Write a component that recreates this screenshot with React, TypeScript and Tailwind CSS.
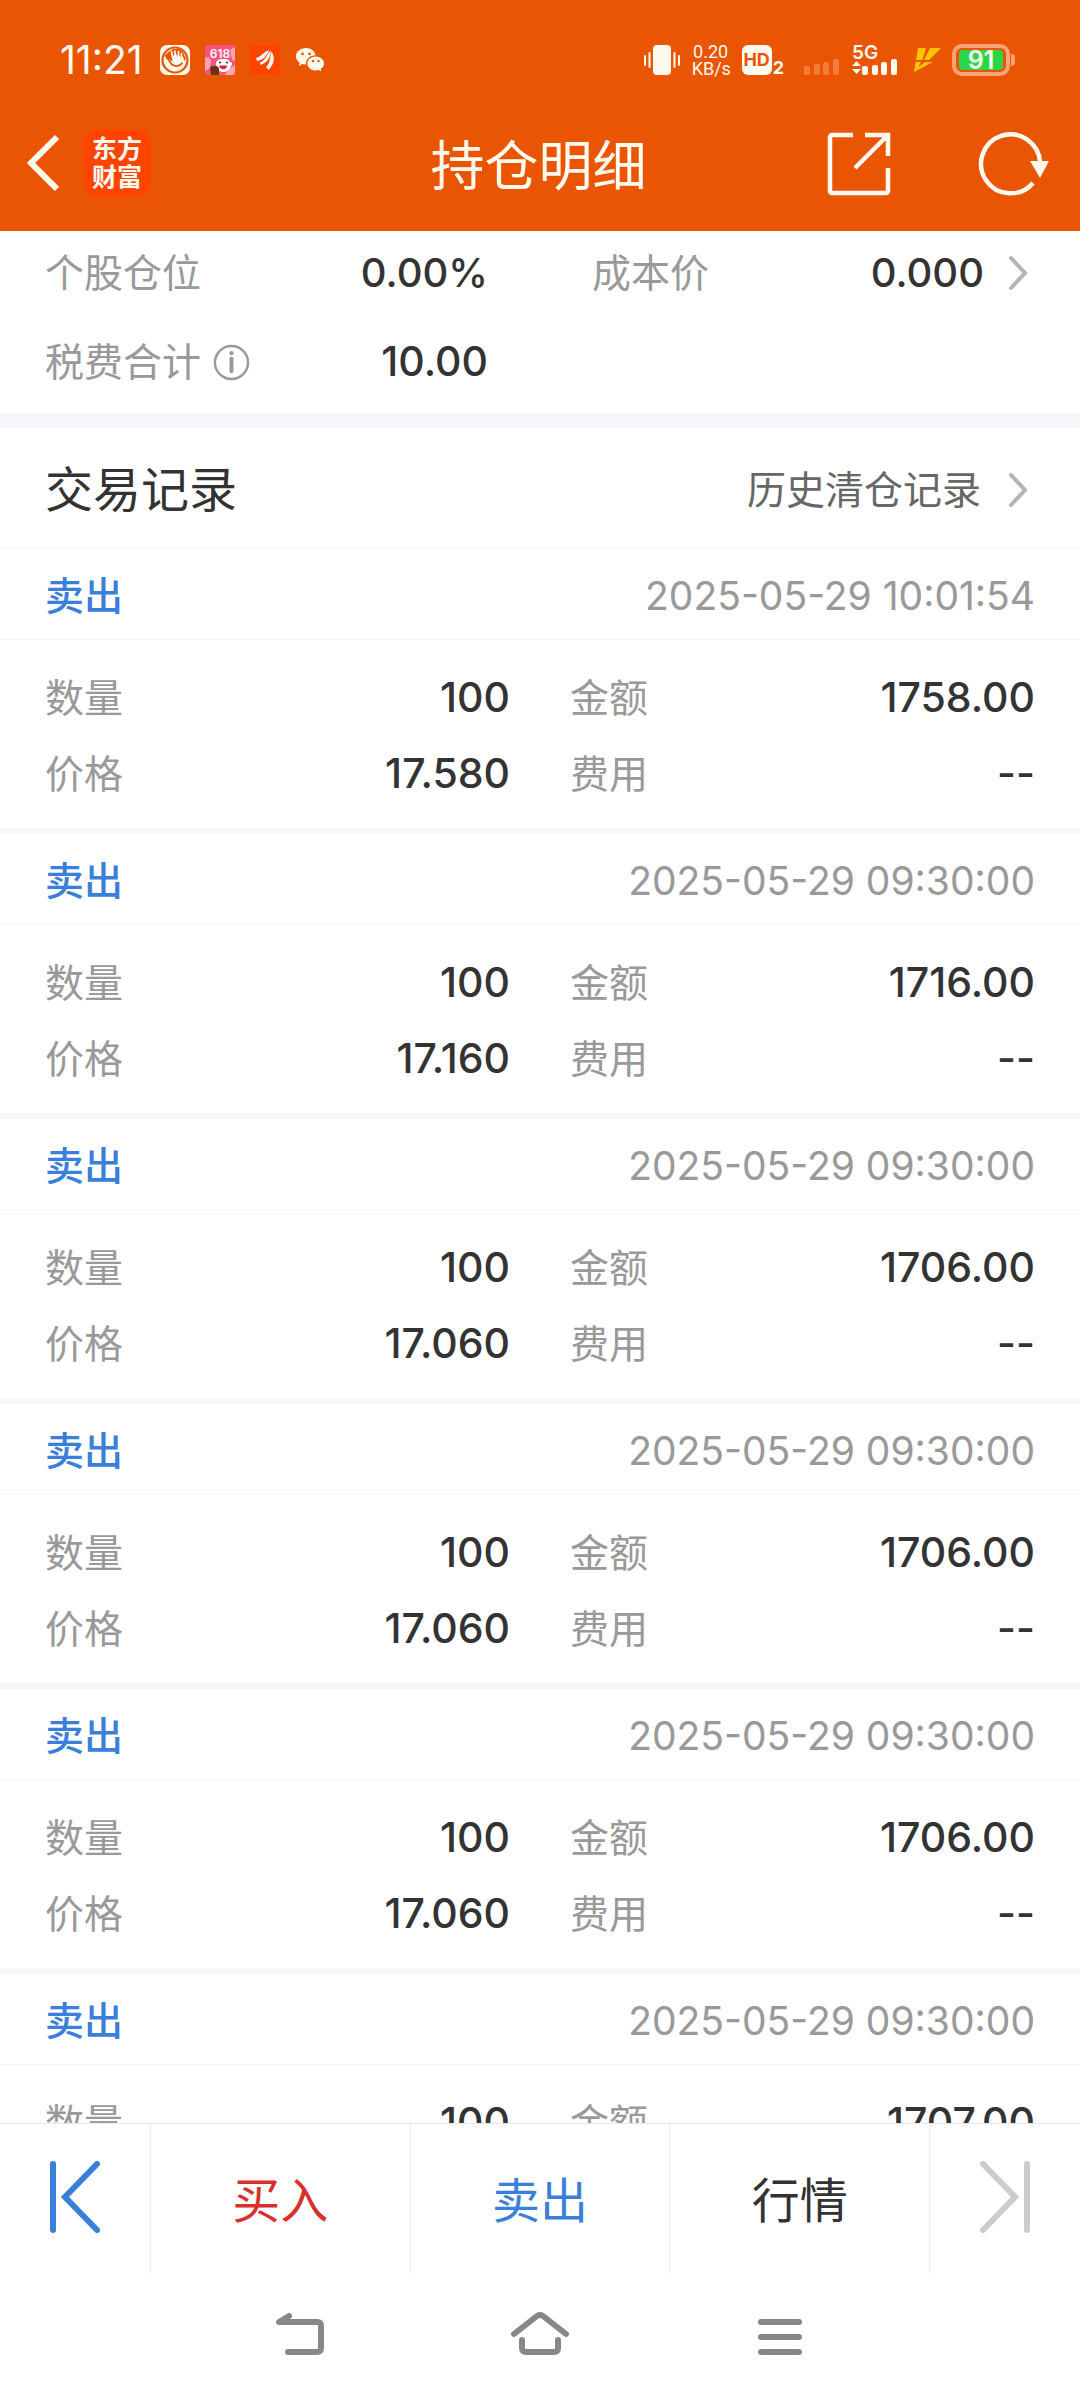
import React from "react";

type Trade = { time: string; amount: string; price?: string };

const trades: Trade[] = [
  { time: "2025-05-29 10:01:54", amount: "1758.00", price: "17.580" },
  { time: "2025-05-29 09:30:00", amount: "1716.00", price: "17.160" },
  { time: "2025-05-29 09:30:00", amount: "1706.00", price: "17.060" },
  { time: "2025-05-29 09:30:00", amount: "1706.00", price: "17.060" },
  { time: "2025-05-29 09:30:00", amount: "1706.00", price: "17.060" },
  { time: "2025-05-29 09:30:00", amount: "1707.00" },
];

function StatusBar() {
  return (
    <div className="flex h-[120px] items-center justify-between pr-[65px] pl-[60px] text-[#fffaf0]">
      <div className="flex items-center">
        <span className="mr-4 w-[84px] text-[39px] leading-[48px] whitespace-nowrap">11:21</span>
        <svg className="mr-[15px] size-[30px]" viewBox="0 0 30 30" fill="none">
          <rect width="30" height="30" rx="7" fill="#fffaf0" />
          <circle cx="15" cy="15" r="12.5" stroke="#ea5504" strokeWidth="2.2" />
          <path d="M4 11L9 6.500l4-2.500h6l4 3 3 7-2 2-1-5-2 3-1-4-2 2.500-2-4-2 3-2.500-3 1 8c-2-1-4-4-8.500-5.500z" fill="#ea5504" />
          <path d="M6 12.500c3 .5 3.500 5 6 7 3 2.500 8 2 10.500-2" stroke="#ea5504" strokeWidth="1.800" />
          <path d="M11.500 6.500l1.500 7M15 6v7M18.500 6.500v7M21.500 8.500v6" stroke="#fffaf0" strokeWidth="1.700" strokeLinecap="round" />
        </svg>
        <svg className="mr-[15px] size-[30px]" viewBox="0 0 30 30">
          <rect width="30" height="30" rx="3" fill="#f4557f" />
          <path d="M0 13c3-2 5 0 6 2l-1 8-5 3zM25 5l5-3v14l-3-1zM24 24l6-4v7a3 3 0 0 1-3 3h-7z" fill="#f9a3bb" />
          <text x="15" y="12.500" textAnchor="middle" fontSize="12" fontWeight="600" fill="#fffaf0">618</text>
          <path d="M11 18c1-3 3-4 7-4 3 0 6 0 7 3 2 0 3 2 1 4-1 4-4 6-8 6s-7-3-7-6z" fill="#fff" />
          <circle cx="15" cy="17.500" r="1" fill="#222" />
          <circle cx="22" cy="17.500" r="1" fill="#222" />
          <path d="M14 20.500h8c0 5-7 5-8 0z" fill="#d2263c" />
          <path d="M5 23l2-2h5l2 2v7H6z" fill="#6b3218" />
        </svg>
        <svg className="mr-4 size-[30px]" viewBox="0 0 30 30" fill="#fffaf0">
          <rect width="30" height="30" rx="2" fill="#ff4400" />
          <path d="M6 13C11 12 13 7 19 5c-2 6-6 10-12 11z" />
          <path d="M10.500 20l-.5-2.500C16 15 17 9 20.500 5.500 21 12 17 18 10.500 20z" />
          <path d="M18.500 25L16 22c4-3 4-10 5.500-15.500C25 12 25 18 18.500 25z" />
        </svg>
        <svg className="h-6 w-7" viewBox="0 0 28 24" fill="#fffaf0">
          <path fillRule="evenodd" d="M10 0C4.500 0 0 3.600 0 8.300c0 2.700 1.400 5 3.700 6.500L2.800 18l3.500-1.900c1.200.3 2.400.5 3.700.5C9.500 11 14 7.500 19.600 7.300 18.600 3 14.700 0 10 0zM6.500 4.500a1.400 1.400 0 1 1 0 2.800 1.400 1.400 0 0 1 0-2.800zm7 0a1.400 1.400 0 1 1 0 2.800 1.400 1.400 0 0 1 0-2.800z" />
          <path fillRule="evenodd" d="M28 15.400c0-3.900-3.800-7-8.300-7s-8.300 3.100-8.300 7 3.700 7 8.300 7c1 0 2-.2 2.900-.4l2.800 1.500-.8-2.500c2-1.300 3.400-3.300 3.400-5.600zm-11-3.600a1.200 1.200 0 1 1 0 2.400 1.200 1.200 0 0 1 0-2.400zm5.500 0a1.200 1.200 0 1 1 0 2.400 1.200 1.200 0 0 1 0-2.400z" />
        </svg>
      </div>
      <div className="flex items-center">
        <svg className="mr-3 h-[30px] w-9" viewBox="0 0 36 30" fill="#fffaf0">
          <rect x="9" width="18" height="30" rx="4" />
          <path d="M1 11v9M5.500 8v14M30.500 8v14M35 11v9" stroke="#fffaf0" strokeWidth="2" strokeLinecap="round" />
        </svg>
        <div className="mr-3 w-[38px] text-center text-[18px] leading-[17px] whitespace-nowrap font-['Roboto',sans-serif]">
          <div>0.20</div>
          <div>KB/s</div>
        </div>
        <div className="mr-5 flex items-end">
          <span className="flex size-[30px] items-center justify-center rounded-md bg-[#fffaf0] text-[18px] leading-none font-bold text-[#ea5504]">HD</span>
          <span className="ml-px text-[18px] leading-[14px] font-bold">2</span>
        </div>
        <svg className="mr-3 h-[30px] w-9" viewBox="0 0 36 30" fill="#f37c3a">
          <rect x="0" y="21" width="6" height="9" rx="2" />
          <rect x="10" y="19" width="6" height="11" rx="2" />
          <rect x="19" y="17" width="6" height="13" rx="2" />
          <rect x="29" y="14" width="6" height="16" rx="2" />
        </svg>
        <div className="relative mr-4 h-[30px] w-[46px]">
          <span className="absolute top-0 left-0 text-[19px] leading-[15px] font-semibold">5G</span>
          <svg className="size-full" viewBox="0 0 46 30" fill="#fffaf0">
            <path d="M0 21l4.500-5 4.500 5zM0 24h9l-4.500 5z" />
            <rect x="10" y="21" width="6" height="9" rx="2" />
            <rect x="20" y="20" width="6" height="10" rx="2" />
            <rect x="29" y="17" width="6" height="13" rx="2" />
            <rect x="39" y="14" width="6" height="16" rx="2" />
          </svg>
        </div>
        <svg className="mr-[10px] h-6 w-7" viewBox="0 0 28 24" fill="#ffc400">
          <path d="M4 0h8L8.500 12H2zM16 0h11L15 12h-5zM1.500 14H7l-2.500 5L11 14h8L0 24z" />
        </svg>
        <div className="flex items-center">
          <div className="flex h-8 w-[58px] items-center justify-center rounded-[10px] border-4 border-[#fba477]">
            <span className="h-5 w-11 rounded-sm bg-[#2ad54a] text-center text-[25px] leading-5 font-semibold">91</span>
          </div>
          <span className="ml-px h-3 w-1 rounded-r-full bg-[#fba477]" />
        </div>
      </div>
    </div>
  );
}

function TitleBar() {
  return (
    <div className="flex h-[111px] items-start pt-[9px] pr-[30px] pl-[27px] text-[#fffaf0]">
      <div className="flex flex-1 items-center gap-6">
        <button aria-label="返回">
          <svg className="h-[68px] w-8" viewBox="0 0 32 68" fill="none" stroke="currentColor" strokeWidth="6">
            <path d="M30 8L4 34l26 26" />
          </svg>
        </button>
        <span className="flex size-[68px] flex-col items-center justify-center rounded-2xl bg-[#ff4400] text-[25px] leading-[28px] font-bold">
          <span>东方</span>
          <span>财富</span>
        </span>
      </div>
      <h1 className="pt-[3px] text-[54px] leading-[70px]">持仓明细</h1>
      <div className="flex flex-1 items-center justify-end gap-[87px] pt-[3px]">
        <button aria-label="分享">
          <svg className="h-16 w-16" viewBox="0 0 64 64" fill="none" stroke="currentColor" strokeWidth="4.500">
            <path d="M26 3H5a2 2 0 0 0-2 2v54a2 2 0 0 0 2 2h54a2 2 0 0 0 2-2V36M38 3h23v21M61 3L28 36" />
          </svg>
        </button>
        <button aria-label="刷新">
          <svg className="h-16 w-[72px]" viewBox="0 0 72 64" fill="none" stroke="currentColor" strokeWidth="4.500">
            <path d="M55 51A29.500 29.500 0 1 1 62 30" />
            <path d="M52 29h19L62 46z" fill="currentColor" stroke="none" />
          </svg>
        </button>
      </div>
    </div>
  );
}

function Chevron() {
  return (
    <svg className="h-9 w-5" viewBox="0 0 20 36" fill="none" stroke="#b4b4b4" strokeWidth="4" strokeLinecap="round">
      <path d="M3 3l14 15L3 33" />
    </svg>
  );
}

const labelCls = "text-[39px] text-[#999999]";
const valueCls = "text-[41px] font-medium text-[#333333]";

function Pair({ label, value }: { label: string; value: string }) {
  return (
    <div className="flex h-[76px] items-center justify-between">
      <dt className={labelCls}>{label}</dt>
      <dd className={valueCls}>{value}</dd>
    </div>
  );
}

function TradeRecord({ trade }: { trade: Trade }) {
  return (
    <li className="border-b-6 border-[#f5f7fa]">
      <div className="flex h-[91px] items-center justify-between border-b border-[#f3f4f5] px-[45px] pt-1">
        <span className="text-[39px] font-medium text-[#3a7fd9]">卖出</span>
        <time className="text-[39px] text-[#999999]">{trade.time}</time>
      </div>
      <dl className="grid grid-cols-2 pt-5 pb-4">
        <div className="pr-[30px] pl-[45px]">
          <Pair label="数量" value="100" />
          {trade.price && <Pair label="价格" value={trade.price} />}
        </div>
        <div className="pr-[45px] pl-[30px]">
          <Pair label="金额" value={trade.amount} />
          {trade.price && <Pair label="费用" value="--" />}
        </div>
      </dl>
    </li>
  );
}

export default function App() {
  return (
    <div className="flex h-screen flex-col bg-white leading-normal font-['Inter','Noto_Sans_CJK_SC',sans-serif]">
      <header className="shrink-0 bg-[#ea5504]">
        <StatusBar />
        <TitleBar />
      </header>

      <main className="min-h-0 flex-1 overflow-y-auto [scrollbar-width:none]">
        <dl className="grid grid-cols-2 border-b-[15px] border-[#f5f7fa] pb-1">
          <div className="flex h-[84px] items-center justify-between pr-[52px] pl-[45px]">
            <dt className={labelCls}>个股仓位</dt>
            <dd className="text-[40px] font-medium text-[#333333]">0.00%</dd>
          </div>
          <div className="flex h-[84px] items-center pr-[52px] pl-[52px]">
            <dt className={labelCls}>成本价</dt>
            <dd className="ml-auto text-[40px] font-medium text-[#333333]">0.000</dd>
            <dd className="ml-6">
              <Chevron />
            </dd>
          </div>
          <div className="flex h-[94px] items-center justify-between pr-[52px] pl-[45px]">
            <dt className="flex items-center gap-3 text-[39px] text-[#999999]">
              税费合计
              <svg className="size-[37px]" viewBox="0 0 38 38" fill="none" stroke="#999" strokeWidth="2.500">
                <circle cx="19" cy="19" r="17" />
                <path d="M19 15v13" strokeWidth="4" strokeLinecap="round" />
                <circle cx="19" cy="9.500" r="2.200" fill="#999" stroke="none" />
              </svg>
            </dt>
            <dd className={valueCls}>10.00</dd>
          </div>
        </dl>

        <section>
          <div className="flex h-[121px] items-center justify-between border-b border-[#f3f4f5] pt-1 pr-[52px] pl-[45px]">
            <h2 className="text-[48px] text-[#333333]">交易记录</h2>
            <a href="#history" className="flex items-center gap-[27px] text-[39px] text-[#666666]">
              历史清仓记录
              <Chevron />
            </a>
          </div>
          <ul>
            {trades.map((t, i) => (
              <TradeRecord key={i} trade={t} />
            ))}
          </ul>
        </section>
      </main>

      <div className="flex h-[151px] shrink-0 divide-x divide-[#ececec] border-t border-[#e8e8e8] text-[48px]">
        <button aria-label="上一只" className="flex w-[151px] items-center justify-center pb-1">
          <svg className="h-[72px] w-[50px]" viewBox="0 0 50 72" fill="none" stroke="#3a7fd9" strokeWidth="6" strokeLinecap="round">
            <path d="M3 3v66M47 3L15 36l32 33" />
          </svg>
        </button>
        <button className="flex-1 pt-1 text-[#d9302c]">买入</button>
        <button className="flex-1 pt-1 text-[#3a7fd9]">卖出</button>
        <button className="flex-1 pt-1 text-[#333333]">行情</button>
        <button aria-label="下一只" disabled className="flex w-[150px] items-center justify-center pb-1">
          <svg className="h-[72px] w-[50px]" viewBox="0 0 50 72" fill="none" stroke="#cccccc" strokeWidth="6" strokeLinecap="round">
            <path d="M47 3v66M3 3l32 33L3 69" />
          </svg>
        </button>
      </div>

      <nav className="flex h-[126px] shrink-0 items-center justify-center gap-[180px] pb-1.5">
        <button aria-label="后退">
          <svg className="h-11 w-[60px]" viewBox="0 0 60 44" fill="none" stroke="#888888" strokeWidth="6" strokeLinecap="round" strokeLinejoin="round">
            <path d="M18 40h29q4 0 4-4V14q0-4-4-4H9l10-6" />
          </svg>
        </button>
        <button aria-label="主页">
          <svg className="h-11 w-[60px]" viewBox="0 0 60 44" fill="none" stroke="#888888" strokeWidth="6" strokeLinecap="round" strokeLinejoin="round">
            <path d="M4 22L27 4q3-2 6 0l23 18M12 28v8q0 4 4 4h28q4 0 4-4v-8" />
          </svg>
        </button>
        <button aria-label="菜单">
          <svg className="h-11 w-[60px]" viewBox="0 0 60 44" fill="none" stroke="#888888" strokeWidth="6" strokeLinecap="round">
            <path d="M11 10h38M11 25h38M11 40h38" />
          </svg>
        </button>
      </nav>
    </div>
  );
}
